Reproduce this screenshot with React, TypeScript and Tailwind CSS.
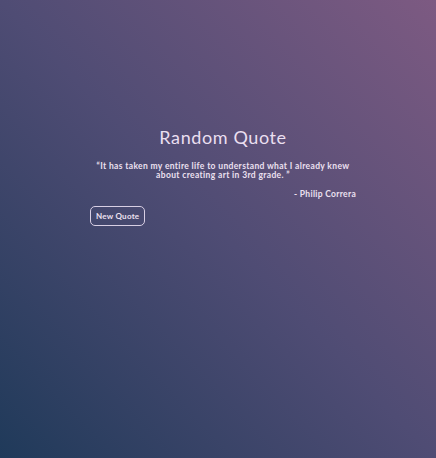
export default function App() {
  return (
    <main
      className="min-h-[458px] w-full bg-gradient-to-tr from-[#1f3a5a] via-[#4f4c74] to-[#7d5a82] text-[#ece0f0]"
      style={{ fontFamily: "Lato, 'Noto Sans', sans-serif" }}
    >
      <div className="ml-[90px] w-[266px] pt-[126px]">
        <h1 className="text-center text-[18px] leading-[22px] tracking-[0.6px] text-[#eadff0]">Random Quote</h1>
        <p className="mt-[14px] text-center text-[8.5px] font-bold leading-[9px] tracking-[0.35px]">
          “It has taken my entire life to understand what I already knew about creating art in 3rd grade. ”
        </p>
        <p className="mt-[9px] text-right text-[8.5px] font-bold leading-[10px] tracking-[0.3px]">- Philip Correra</p>
        <button className="mt-[7px] h-[20px] rounded-[5px] border border-[#d8cfe4] px-[5px] text-[8px] font-bold tracking-[0.25px] text-[#ece0f0]">
          New Quote
        </button>
      </div>
    </main>
  );
}
